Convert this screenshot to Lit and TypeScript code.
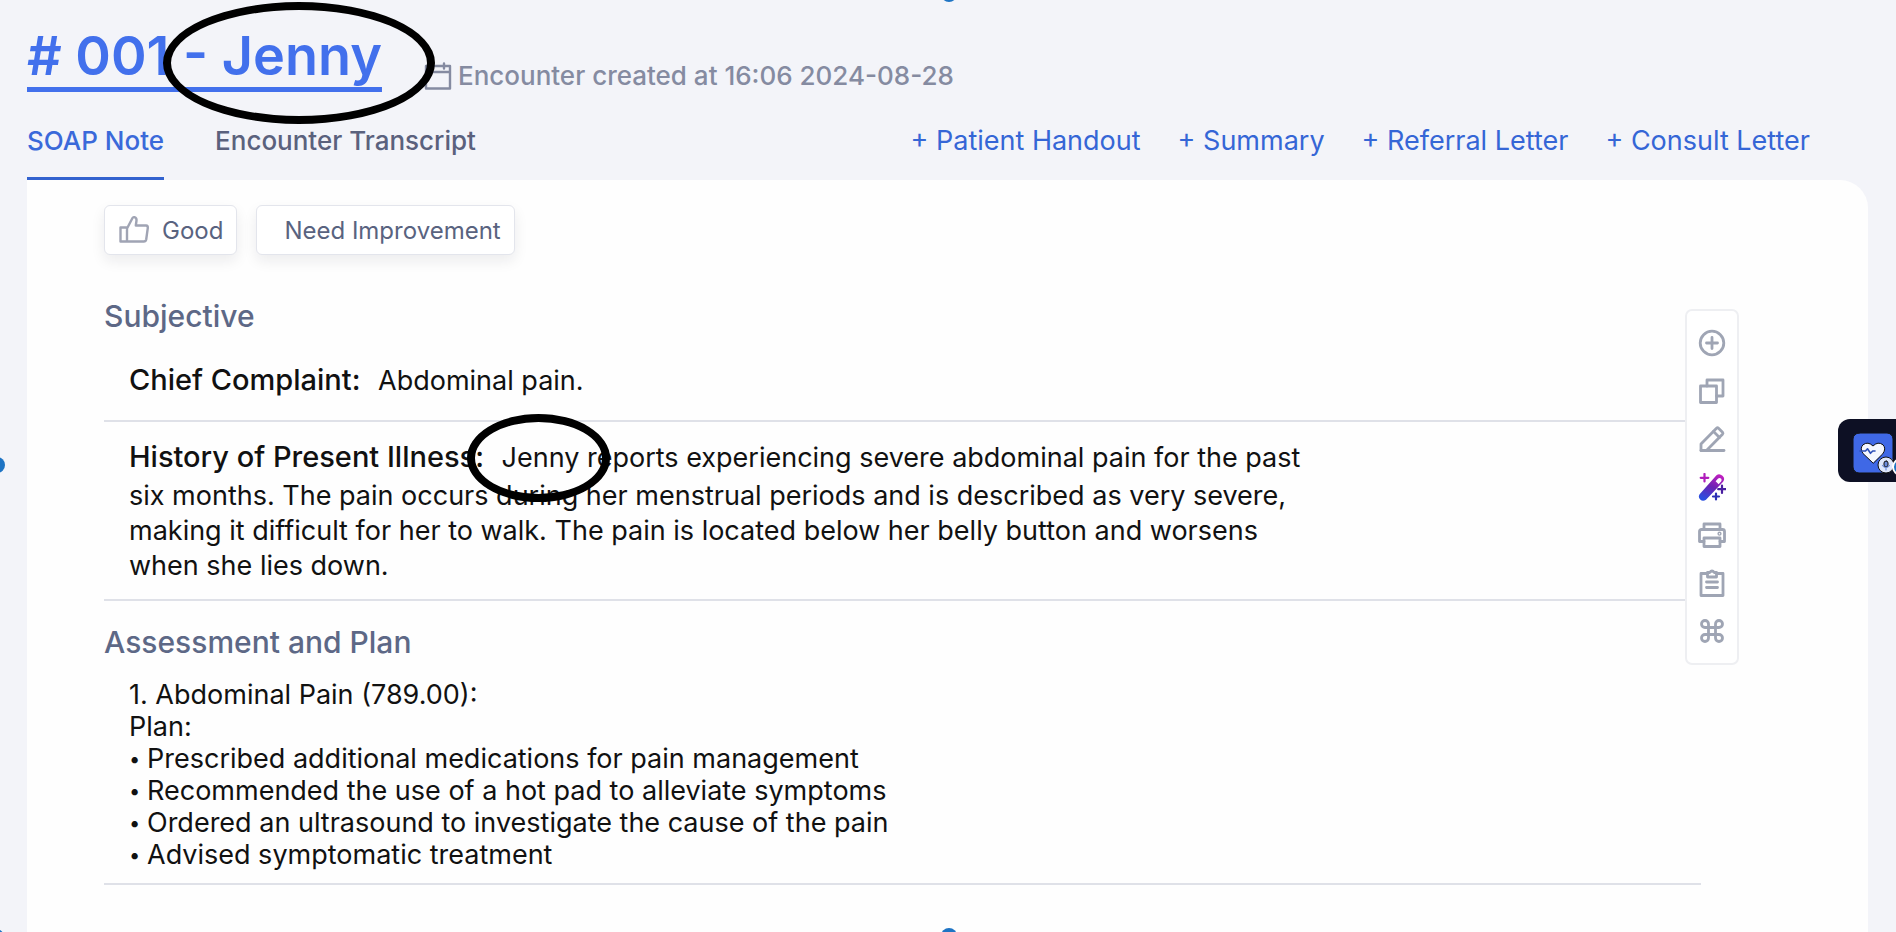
import { LitElement, html, css, svg } from "lit";
import { customElement, state } from "lit/decorators.js";

const toolIcons = [
  {
    label: "Add",
    icon: svg`<circle cx="14" cy="14" r="11.800"/><path d="M14 8.500v11M8.500 14h11"/>`,
  },
  {
    label: "Copy",
    icon: svg`<path d="M2.500 9h16v16.500h-16z"/><path d="M9 9V3h16v16h-6.500"/>`,
  },
  {
    label: "Edit",
    icon: svg`<path d="M3 25.500h23"/><path d="M3 25.500v-6.500L18.500 3.200q1-.9 2 0l4 4q.9 1 0 2L8.500 25.500z"/><path d="M15.500 6.500l6 6"/>`,
  },
  {
    label: "Magic",
    icon: svg`<defs><linearGradient id="wand" gradientUnits="userSpaceOnUse" x1="20" y1="1" x2="8" y2="27"><stop offset="0" stop-color="#c21fc0"/><stop offset=".5" stop-color="#6a22b4"/><stop offset="1" stop-color="#2a4fe0"/></linearGradient></defs>
      <g stroke="none" fill="url(#wand)"><path fill-rule="evenodd" d="M1.600 21.200L18.500 2.200q3-2.200 6 .6t.6 6L8 26.800q-3.200 2.200-5.800-.2-2.400-2.600-.6-5.400zM17.600 8.200l3 3 2.500-2.700q1-1.500-.1-2.900-1.400-1.200-2.900 0z"/></g>
      <path stroke="#b01dbb" stroke-width="2.200" d="M6.500 1v7.500M2.700 4.800h7.600"/><path stroke="#4a1fa0" stroke-width="2.200" d="M24 12.500v7.500M20.200 16.200h7.600"/><path stroke="#2b2fb4" stroke-width="2.200" d="M18 20.500v6M15 23.500h6"/>`,
  },
  {
    label: "Print",
    icon: svg`<path d="M6 8.500V3h16v5.500"/><path d="M6 20.500H1.500v-10q0-2 2-2h21q2 0 2 2v10H22"/><path d="M6 17h16v8.500H6z"/><circle cx="21.500" cy="12.700" r=".7"/>`,
  },
  {
    label: "Clipboard",
    icon: svg`<path d="M9 4.500H3v22h22v-22h-6"/><path d="M9.500 3.500h2.200q2.300-3 4.600 0h2.200v4.500h-9z"/><path d="M8.500 13h11M8.500 18.500h11"/>`,
  },
  {
    label: "Shortcuts",
    icon: svg`<path d="M10.500 10.500h7v7h-7z"/><path d="M10.500 10.500H7A3.500 3.500 0 1 1 10.500 7zM17.500 10.500V7A3.500 3.500 0 1 1 21 10.500zM17.500 17.500H21A3.500 3.500 0 1 1 17.500 21zM10.500 17.500V21A3.500 3.500 0 1 1 7 17.500z"/>`,
  },
];

const planItems = [
  "Prescribed additional medications for pain management",
  "Recommended the use of a hot pad to alleviate symptoms",
  "Ordered an ultrasound to investigate the cause of the pain",
  "Advised symptomatic treatment",
];

@customElement("app-root")
export class AppRoot extends LitElement {
  @state() private tab = "SOAP Note";

  static styles = css`
    :host {
      display: flex;
      flex-direction: column;
      position: relative;
      box-sizing: border-box;
      min-height: 100vh;
      overflow: hidden;
      background: #f3f4f9;
      font-family: Inter, sans-serif;
      color: #111;
    }
    *, *::before, *::after { box-sizing: border-box; }
    button { font: inherit; color: inherit; background: none; border: 0; padding: 0; cursor: pointer; }
    h1, h2, h3, p, ul { margin: 0; padding: 0; font-weight: inherit; }
    svg { display: block; fill: none; stroke: currentColor; stroke-linejoin: round; stroke-linecap: round; }

    .header { display: flex; align-items: flex-end; gap: 42px; padding: 20px 27px 0; }
    .title { font-size: 54px; line-height: 72px; font-weight: 600; }
    .title a {
      color: #4270ec;
      text-decoration: underline;
      text-decoration-thickness: 5px;
      text-underline-offset: 12px;
    }
    .meta { display: flex; align-items: center; gap: 6px; font-size: 26px; line-height: 32px; font-weight: 500; color: #858ba1; }

    .bar { display: flex; justify-content: space-between; align-items: flex-start; padding: 33px 86px 0 27px; font-size: 26px; line-height: 32px; }
    .tabs { display: flex; gap: 51px; }
    .tab { padding-bottom: 20px; border-bottom: 3px solid transparent; font-weight: 500; color: #5a617d; }
    .tab.on { color: #3a69da; border-color: #3262cf; }
    .links { display: flex; gap: 37px; font-size: 27px; }
    .links button { color: #3566d6; }

    .panel { position: relative; flex: 1; margin: 0 28px 0 27px; padding: 25px 167px 48px 77px; background: #fefefe; border-radius: 0 28px 0 0; }
    .feedback { display: flex; gap: 19px; }
    .chip {
      display: flex; align-items: center; gap: 12px; height: 50px; padding: 0 13px;
      border: 1px solid #e3e5ec; border-radius: 6px; background: #fff; color: #59637f;
      font-size: 24px; box-shadow: 0 6px 14px rgba(20, 20, 40, 0.08);
    }
    .chip.bare { padding-left: 27px; }
    .chip svg { color: #a0a4b4; }

    .group { font-size: 30px; line-height: 36px; font-weight: 500; color: #5d6886; }
    .first { margin-top: 43px; }
    .second { margin-top: 23px; }
    .entry { border-bottom: 2px solid #dfe1e8; padding-left: 25px; font-size: 27px; line-height: 35px; }
    .text { max-width: 1200px; }
    .label { display: inline; margin-right: 10px; font-size: 29px; line-height: 43px; font-weight: 500; }
    .text p { display: inline; }
    .chief { padding-top: 24px; padding-bottom: 19px; }
    .history { padding-top: 13px; padding-bottom: 16px; }
    .plan { padding-top: 19px; padding-bottom: 12px; line-height: 32px; }
    .plan ul { list-style: none; }
    .plan li { display: flex; }
    .plan li::before { content: "•"; width: 18px; font-size: 20px; }

    .tools {
      position: absolute; top: 129px; right: 129px; width: 54px; padding: 8px 0;
      display: flex; flex-direction: column; align-items: center;
      border: 2px solid #eeeff2; border-radius: 7px; background: #fff; color: #9fa5b4;
    }
    .tools button { display: grid; place-items: center; width: 100%; height: 48px; }

    .widget {
      position: absolute; top: 419px; right: 0; width: 58px; height: 63px;
      padding: 12px 0 0 15px; border-radius: 12px 0 0 12px; background: #0d1024;
    }
    .ring { position: absolute; border: 8px solid #000; border-radius: 50%; pointer-events: none; }
    .ring.name { left: 163px; top: 2px; width: 272px; height: 122px; }
    .ring.mention { left: 467px; top: 414px; width: 143px; height: 88px; }
    .handle { position: absolute; width: 16px; height: 16px; border-radius: 50%; background: #1e74c4; }
    .handle.n { left: 941px; top: -14px; }
    .handle.s { left: 941px; bottom: -11px; }
    .handle.w { left: -11px; top: 457px; }
    .handle.sw { left: -12px; bottom: -12px; }
    .handle.nw { left: -14px; top: -14px; }
    .handle.se { right: -15px; bottom: -14px; }
  `;

  render() {
    return html`
      <header class="header">
        <h1 class="title"><a href="#encounter"># 001 - Jenny</a></h1>
        <div class="meta">
          <svg width="28" height="32" viewBox="0 0 28 32" stroke-width="2.400"><path d="M2 6h24v22.500H2zM2 12h24M8 3.500v5M20 3.500v5"/></svg>
          <span>Encounter created at 16:06 2024-08-28</span>
        </div>
      </header>
      <nav class="bar">
        <div class="tabs">
          ${["SOAP Note", "Encounter Transcript"].map(
            (t) => html`<button class="tab ${this.tab === t ? "on" : ""}" @click=${() => (this.tab = t)}>${t}</button>`
          )}
        </div>
        <div class="links">
          ${["Patient Handout", "Summary", "Referral Letter", "Consult Letter"].map((t) => html`<button>+ ${t}</button>`)}
        </div>
      </nav>
      <main class="panel">
        <div class="feedback">
          <button class="chip">
            <svg width="32" height="32" viewBox="0 0 32 32" stroke-width="2.400"><path d="M2.500 13.500h6.500v14H2.500zM9 14.500l5.500-10.500q.6-1.200 2-.8 2.300.8 2 3.300l-.7 5H28q2 .2 1.800 2.300l-1.600 11.700q-.4 2-2.400 2H9"/></svg>
            Good
          </button>
          <button class="chip bare">Need Improvement</button>
        </div>
        <h2 class="group first">Subjective</h2>
        <section class="entry chief">
          <div class="text"><h3 class="label">Chief Complaint:</h3> <p>Abdominal pain.</p></div>
        </section>
        <section class="entry history">
          <div class="text">
            <h3 class="label">History of Present Illness:</h3>
            <p>Jenny reports experiencing severe abdominal pain for the past six months. The pain occurs during her menstrual periods and is described as very severe, making it difficult for her to walk. The pain is located below her belly button and worsens when she lies down.</p>
          </div>
        </section>
        <h2 class="group second">Assessment and Plan</h2>
        <section class="entry plan">
          <p>1. Abdominal Pain (789.00):</p>
          <p>Plan:</p>
          <ul>${planItems.map((t) => html`<li>${t}</li>`)}</ul>
        </section>
        <div class="tools">
          ${toolIcons.map(
            (t) => html`<button aria-label=${t.label}><svg width="28" height="28" viewBox="0 0 28 28" stroke-width="2.800">${t.icon}</svg></button>`
          )}
        </div>
      </main>
      <button class="widget" aria-label="Assistant">
        <svg width="43" height="48" viewBox="0 0 43 48" stroke="none">
          <rect width="40" height="40" rx="6" fill="#3f68e6"/>
          <path d="M20 30L10 20.500Q6.500 15.500 10 11.800 15 8 20 13q5-5 10-1.200 3.500 3.700 0 8.700z" fill="#f4f7ff"/>
          <path d="M7 18h5.500l2-2.200 3 4.500 2.200-2.300h2.300" fill="none" stroke="#2c4fb8" stroke-width="1.600"/>
          <circle cx="33" cy="32" r="8" fill="#dfe7fb"/>
          <rect x="31" y="28" width="4" height="6" rx="2" fill="#6b8bdc"/>
          <path d="M29.500 32.500q3.500 4.500 7 0M33 35v2" fill="none" stroke="#6b8bdc" stroke-width="1.200"/>
          <circle cx="48" cy="34" r="8" fill="#1e74c4" stroke="#fff" stroke-width="2"/>
        </svg>
      </button>
      <div class="ring name"></div>
      <div class="ring mention"></div>
      ${["nw", "n", "w", "sw", "s", "se"].map((p) => html`<span class="handle ${p}"></span>`)}
    `;
  }
}
